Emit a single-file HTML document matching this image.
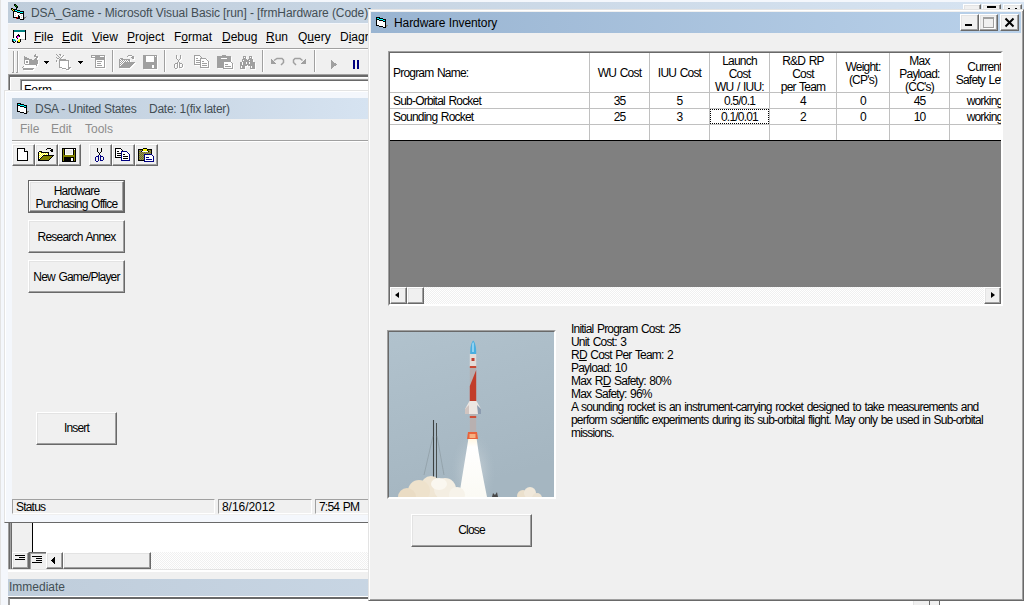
<!DOCTYPE html>
<html><head><meta charset="utf-8">
<style>
*{margin:0;padding:0;box-sizing:border-box}
html,body{width:1024px;height:605px;overflow:hidden;background:#f4f7fc;font-family:"Liberation Sans",sans-serif;}
.a{position:absolute}
.t{position:absolute;white-space:nowrap;font-size:11px;line-height:13px;color:#000}
.cap-in{background:linear-gradient(to right,#bfcddb,#d7e4f2);}
.cap-act{background:linear-gradient(to right,#99b4d1,#b9d1ea);}
.btn{position:absolute;background:#f0f0f0;border-top:1px solid #fff;border-left:1px solid #fff;border-right:1px solid #696969;border-bottom:1px solid #696969;box-shadow:inset -1px -1px 0 #a0a0a0, inset 1px 1px 0 #e3e3e3;}
.sunk{position:absolute;border-top:1px solid #a0a0a0;border-left:1px solid #a0a0a0;border-right:1px solid #fff;border-bottom:1px solid #fff;}
.gt{font-size:12px;letter-spacing:-0.8px;word-spacing:1px}
u{text-decoration:underline;text-decoration-thickness:1px;text-underline-offset:1px}
</style></head><body>

<!-- ===== Main VB IDE window ===== -->
<div class="a" style="left:0;top:0;width:1px;height:605px;background:#e3e3e3"></div>
<div class="a cap-in" style="left:8px;top:2px;width:1016px;height:21px"></div>
<svg class="a" style="left:8px;top:2px" width="20" height="20" shape-rendering="crispEdges"><rect x="6" y="2" width="2" height="1" fill="#000"/><rect x="6" y="3" width="1" height="1" fill="#000"/><rect x="7" y="3" width="1" height="1" fill="#00a000"/><rect x="8" y="3" width="1" height="1" fill="#000"/><rect x="7" y="4" width="1" height="1" fill="#000"/><rect x="8" y="4" width="1" height="1" fill="#00a000"/><rect x="9" y="4" width="1" height="1" fill="#000"/><rect x="8" y="5" width="2" height="1" fill="#000"/><rect x="3" y="6" width="2" height="1" fill="#000"/><rect x="8" y="6" width="1" height="1" fill="#000"/><rect x="3" y="7" width="1" height="1" fill="#000"/><rect x="4" y="7" width="1" height="1" fill="#ffff00"/><rect x="5" y="7" width="4" height="1" fill="#000"/><rect x="4" y="8" width="1" height="1" fill="#000"/><rect x="5" y="8" width="1" height="1" fill="#ffff00"/><rect x="6" y="8" width="1" height="1" fill="#000"/><rect x="7" y="8" width="2" height="1" fill="#00ffff"/><rect x="9" y="8" width="3" height="1" fill="#000"/><rect x="5" y="9" width="4" height="1" fill="#000"/><rect x="9" y="9" width="3" height="1" fill="#00ffff"/><rect x="12" y="9" width="4" height="1" fill="#000"/><rect x="5" y="10" width="1" height="1" fill="#000"/><rect x="6" y="10" width="3" height="1" fill="#fff"/><rect x="9" y="10" width="3" height="1" fill="#000"/><rect x="12" y="10" width="3" height="1" fill="#00ffff"/><rect x="15" y="10" width="1" height="1" fill="#000"/><rect x="5" y="11" width="1" height="1" fill="#000"/><rect x="6" y="11" width="1" height="1" fill="#fff"/><rect x="7" y="11" width="1" height="1" fill="#c0c0c0"/><rect x="8" y="11" width="4" height="1" fill="#fff"/><rect x="12" y="11" width="4" height="1" fill="#000"/><rect x="5" y="12" width="1" height="1" fill="#000"/><rect x="6" y="12" width="5" height="1" fill="#fff"/><rect x="11" y="12" width="1" height="1" fill="#c0c0c0"/><rect x="12" y="12" width="3" height="1" fill="#fff"/><rect x="15" y="12" width="1" height="1" fill="#000"/><rect x="5" y="13" width="1" height="1" fill="#000"/><rect x="6" y="13" width="1" height="1" fill="#fff"/><rect x="7" y="13" width="1" height="1" fill="#c0c0c0"/><rect x="8" y="13" width="2" height="1" fill="#fff"/><rect x="10" y="13" width="1" height="1" fill="#000"/><rect x="11" y="13" width="2" height="1" fill="#fff"/><rect x="13" y="13" width="1" height="1" fill="#c0c0c0"/><rect x="14" y="13" width="1" height="1" fill="#fff"/><rect x="15" y="13" width="1" height="1" fill="#000"/><rect x="5" y="14" width="1" height="1" fill="#000"/><rect x="6" y="14" width="4" height="1" fill="#fff"/><rect x="10" y="14" width="2" height="1" fill="#000"/><rect x="12" y="14" width="3" height="1" fill="#fff"/><rect x="15" y="14" width="1" height="1" fill="#000"/><rect x="18" y="14" width="1" height="1" fill="#b0b0b0"/><rect x="5" y="15" width="4" height="1" fill="#000"/><rect x="9" y="15" width="1" height="1" fill="#ff0000"/><rect x="10" y="15" width="2" height="1" fill="#000"/><rect x="12" y="15" width="1" height="1" fill="#fff"/><rect x="13" y="15" width="1" height="1" fill="#c0c0c0"/><rect x="14" y="15" width="1" height="1" fill="#fff"/><rect x="15" y="15" width="1" height="1" fill="#000"/><rect x="16" y="15" width="2" height="1" fill="#808080"/><rect x="8" y="16" width="1" height="1" fill="#ff0000"/><rect x="9" y="16" width="3" height="1" fill="#000"/><rect x="12" y="16" width="3" height="1" fill="#fff"/><rect x="15" y="16" width="1" height="1" fill="#000"/><rect x="16" y="16" width="1" height="1" fill="#808080"/><rect x="12" y="17" width="4" height="1" fill="#000"/></svg>
<div class="t" style="left:31px;top:6px;font-size:12px;line-height:15px;color:#434e54;letter-spacing:-0.09px">DSA_Game - Microsoft Visual Basic [run] - [frmHardware (Code)]</div>

<div class="btn" style="left:963px;top:4px;width:18px;height:16px"></div>
<div class="btn" style="left:982px;top:4px;width:19px;height:16px"></div>
<div class="btn" style="left:1003px;top:4px;width:19px;height:16px"></div>
<div class="a" style="left:987px;top:6px;width:9px;height:2px;background:#000"></div>
<div class="a" style="left:1008px;top:8px;width:2px;height:1px;background:#000"></div>
<div class="a" style="left:1015px;top:8px;width:2px;height:1px;background:#000"></div>
<!-- menubar -->
<div class="a" style="left:8px;top:24px;width:1016px;height:25px;background:#f0f0f0;border-bottom:1px solid #a0a0a0"></div>
<div class="a" style="left:8px;top:49px;width:1016px;height:1px;background:#fff"></div>
<svg class="a" style="left:8px;top:26px" width="20" height="20" shape-rendering="crispEdges"><rect x="5" y="4" width="1" height="1" fill="#000"/><rect x="6" y="4" width="11" height="1" fill="#008080"/><rect x="17" y="4" width="1" height="1" fill="#000"/><rect x="5" y="5" width="1" height="1" fill="#000"/><rect x="6" y="5" width="11" height="1" fill="#008080"/><rect x="17" y="5" width="1" height="1" fill="#000"/><rect x="5" y="6" width="1" height="1" fill="#000"/><rect x="6" y="6" width="11" height="1" fill="#fff"/><rect x="17" y="6" width="1" height="1" fill="#000"/><rect x="5" y="7" width="1" height="1" fill="#000"/><rect x="6" y="7" width="11" height="1" fill="#fff"/><rect x="17" y="7" width="1" height="1" fill="#000"/><rect x="5" y="8" width="1" height="1" fill="#000"/><rect x="6" y="8" width="4" height="1" fill="#fff"/><rect x="10" y="8" width="1" height="1" fill="#000"/><rect x="11" y="8" width="6" height="1" fill="#fff"/><rect x="17" y="8" width="1" height="1" fill="#000"/><rect x="5" y="9" width="1" height="1" fill="#000"/><rect x="6" y="9" width="3" height="1" fill="#fff"/><rect x="9" y="9" width="3" height="1" fill="#000"/><rect x="12" y="9" width="5" height="1" fill="#fff"/><rect x="17" y="9" width="1" height="1" fill="#000"/><rect x="5" y="10" width="1" height="1" fill="#000"/><rect x="6" y="10" width="2" height="1" fill="#fff"/><rect x="8" y="10" width="1" height="1" fill="#000"/><rect x="9" y="10" width="2" height="1" fill="#ff00ff"/><rect x="11" y="10" width="1" height="1" fill="#000"/><rect x="12" y="10" width="5" height="1" fill="#fff"/><rect x="17" y="10" width="1" height="1" fill="#000"/><rect x="5" y="11" width="1" height="1" fill="#000"/><rect x="6" y="11" width="2" height="1" fill="#fff"/><rect x="8" y="11" width="1" height="1" fill="#000"/><rect x="9" y="11" width="1" height="1" fill="#ff00ff"/><rect x="10" y="11" width="7" height="1" fill="#fff"/><rect x="17" y="11" width="1" height="1" fill="#000"/><rect x="6" y="12" width="3" height="1" fill="#fff"/><rect x="9" y="12" width="1" height="1" fill="#000"/><rect x="10" y="12" width="7" height="1" fill="#fff"/><rect x="17" y="12" width="1" height="1" fill="#000"/><rect x="4" y="13" width="1" height="1" fill="#000"/><rect x="5" y="13" width="2" height="1" fill="#00c8c8"/><rect x="11" y="13" width="1" height="1" fill="#ffff00"/><rect x="12" y="13" width="1" height="1" fill="#000"/><rect x="13" y="13" width="4" height="1" fill="#c0c0c0"/><rect x="17" y="13" width="1" height="1" fill="#000"/><rect x="4" y="14" width="1" height="1" fill="#000"/><rect x="5" y="14" width="3" height="1" fill="#00c8c8"/><rect x="10" y="14" width="2" height="1" fill="#ffff00"/><rect x="12" y="14" width="1" height="1" fill="#000"/><rect x="4" y="15" width="2" height="1" fill="#000"/><rect x="7" y="15" width="1" height="1" fill="#000"/><rect x="9" y="15" width="1" height="1" fill="#000"/><rect x="10" y="15" width="2" height="1" fill="#ffff00"/><rect x="12" y="15" width="1" height="1" fill="#000"/><rect x="5" y="16" width="2" height="1" fill="#000"/><rect x="9" y="16" width="3" height="1" fill="#000"/></svg>
<div class="t" style="left:34px;top:30px;font-size:12px;line-height:15px"><u>F</u>ile</div>
<div class="t" style="left:62px;top:30px;font-size:12px;line-height:15px"><u>E</u>dit</div>
<div class="t" style="left:92px;top:30px;font-size:12px;line-height:15px"><u>V</u>iew</div>
<div class="t" style="left:127px;top:30px;font-size:12px;line-height:15px"><u>P</u>roject</div>
<div class="t" style="left:174px;top:30px;font-size:12px;line-height:15px">F<u>o</u>rmat</div>
<div class="t" style="left:222px;top:30px;font-size:12px;line-height:15px"><u>D</u>ebug</div>
<div class="t" style="left:266px;top:30px;font-size:12px;line-height:15px"><u>R</u>un</div>
<div class="t" style="left:298px;top:30px;font-size:12px;line-height:15px">Q<u>u</u>ery</div>
<div class="t" style="left:340px;top:30px;font-size:12px;line-height:15px">D<u>i</u>agram</div>

<!-- toolbar -->
<div class="a" style="left:8px;top:50px;width:1016px;height:24px;background:#f0f0f0"></div>

<svg class="a" style="left:0;top:48px" width="368" height="28" shape-rendering="crispEdges">
<rect x="13" y="3" width="1" height="21" fill="#a0a0a0"/><rect x="17" y="3" width="1" height="21" fill="#a0a0a0"/>
<rect x="14" y="3" width="1" height="21" fill="#fff"/><rect x="18" y="3" width="1" height="21" fill="#fff"/>
<rect x="12" y="24" width="2" height="1" fill="#a0a0a0"/><rect x="16" y="24" width="2" height="1" fill="#a0a0a0"/>
<path d="M44,13 h5 l-2.5,3 z" fill="#000"/>
<path d="M78,13 h5 l-2.5,3 z" fill="#000"/>
<rect x="112" y="2" width="1" height="22" fill="#a0a0a0"/><rect x="113" y="2" width="1" height="22" fill="#fff"/>
<rect x="164" y="2" width="1" height="22" fill="#a0a0a0"/><rect x="165" y="2" width="1" height="22" fill="#fff"/>
<rect x="262" y="2" width="1" height="22" fill="#a0a0a0"/><rect x="263" y="2" width="1" height="22" fill="#fff"/>
<g fill="none" stroke="#a0a0a0" stroke-width="1.5" shape-rendering="auto">
<path d="M274,12.5 L277,10.5 L282,10.5 L283.5,12 L283.5,14.5 L281,17"/>
<path d="M302.5,12.5 L300,10.5 L295,10.5 L293.5,12 L293.5,14.5 L296,17"/>
</g>
<path d="M271,10 L271,16 L276,16 Z" fill="#a0a0a0"/>
<path d="M306,10 L306,16 L301,16 Z" fill="#a0a0a0"/>
<rect x="314" y="2" width="1" height="22" fill="#a0a0a0"/><rect x="315" y="2" width="1" height="22" fill="#fff"/>
<path d="M331,12 L337,16.5 L331,21 Z" fill="#a0a0a0"/>
<rect x="353" y="12" width="2" height="9" fill="#000080"/><rect x="357" y="12" width="2" height="9" fill="#000080"/>
</svg>
<svg class="a" style="left:0;top:48px" width="368" height="28" shape-rendering="crispEdges"><rect x="35" y="6" width="1" height="1" fill="#a0a0a0"/><rect x="56" y="6" width="1" height="1" fill="#a0a0a0"/><rect x="59" y="6" width="2" height="1" fill="#a0a0a0"/><rect x="34" y="7" width="2" height="1" fill="#a0a0a0"/><rect x="36" y="7" width="1" height="1" fill="#fff"/><rect x="57" y="7" width="1" height="1" fill="#a0a0a0"/><rect x="60" y="7" width="1" height="1" fill="#a0a0a0"/><rect x="61" y="7" width="1" height="1" fill="#fff"/><rect x="63" y="7" width="1" height="1" fill="#a0a0a0"/><rect x="91" y="7" width="14" height="1" fill="#a0a0a0"/><rect x="128" y="7" width="4" height="1" fill="#a0a0a0"/><rect x="143" y="7" width="14" height="1" fill="#a0a0a0"/><rect x="176" y="7" width="1" height="1" fill="#a0a0a0"/><rect x="180" y="7" width="1" height="1" fill="#a0a0a0"/><rect x="194" y="7" width="6" height="1" fill="#a0a0a0"/><rect x="222" y="7" width="4" height="1" fill="#a0a0a0"/><rect x="24" y="8" width="1" height="1" fill="#a0a0a0"/><rect x="34" y="8" width="4" height="1" fill="#a0a0a0"/><rect x="58" y="8" width="1" height="1" fill="#a0a0a0"/><rect x="61" y="8" width="1" height="1" fill="#fff"/><rect x="62" y="8" width="1" height="1" fill="#a0a0a0"/><rect x="64" y="8" width="1" height="1" fill="#fff"/><rect x="91" y="8" width="1" height="1" fill="#a0a0a0"/><rect x="92" y="8" width="3" height="1" fill="#fff"/><rect x="95" y="8" width="5" height="1" fill="#a0a0a0"/><rect x="100" y="8" width="4" height="1" fill="#fff"/><rect x="104" y="8" width="1" height="1" fill="#a0a0a0"/><rect x="105" y="8" width="1" height="1" fill="#fff"/><rect x="127" y="8" width="1" height="1" fill="#a0a0a0"/><rect x="129" y="8" width="3" height="1" fill="#fff"/><rect x="132" y="8" width="2" height="1" fill="#a0a0a0"/><rect x="143" y="8" width="3" height="1" fill="#a0a0a0"/><rect x="146" y="8" width="8" height="1" fill="#fff"/><rect x="154" y="8" width="1" height="1" fill="#a0a0a0"/><rect x="155" y="8" width="1" height="1" fill="#fff"/><rect x="156" y="8" width="1" height="1" fill="#a0a0a0"/><rect x="157" y="8" width="1" height="1" fill="#fff"/><rect x="176" y="8" width="1" height="1" fill="#a0a0a0"/><rect x="177" y="8" width="1" height="1" fill="#fff"/><rect x="180" y="8" width="1" height="1" fill="#a0a0a0"/><rect x="181" y="8" width="1" height="1" fill="#fff"/><rect x="194" y="8" width="1" height="1" fill="#a0a0a0"/><rect x="195" y="8" width="5" height="1" fill="#fff"/><rect x="200" y="8" width="1" height="1" fill="#a0a0a0"/><rect x="217" y="8" width="14" height="1" fill="#a0a0a0"/><rect x="243" y="8" width="3" height="1" fill="#a0a0a0"/><rect x="249" y="8" width="3" height="1" fill="#a0a0a0"/><rect x="24" y="9" width="3" height="1" fill="#a0a0a0"/><rect x="35" y="9" width="1" height="1" fill="#fff"/><rect x="36" y="9" width="2" height="1" fill="#a0a0a0"/><rect x="38" y="9" width="1" height="1" fill="#fff"/><rect x="56" y="9" width="1" height="1" fill="#a0a0a0"/><rect x="59" y="9" width="1" height="1" fill="#a0a0a0"/><rect x="61" y="9" width="1" height="1" fill="#a0a0a0"/><rect x="63" y="9" width="1" height="1" fill="#fff"/><rect x="91" y="9" width="14" height="1" fill="#a0a0a0"/><rect x="105" y="9" width="1" height="1" fill="#fff"/><rect x="128" y="9" width="1" height="1" fill="#fff"/><rect x="131" y="9" width="3" height="1" fill="#a0a0a0"/><rect x="134" y="9" width="1" height="1" fill="#fff"/><rect x="143" y="9" width="3" height="1" fill="#a0a0a0"/><rect x="146" y="9" width="8" height="1" fill="#fff"/><rect x="154" y="9" width="3" height="1" fill="#a0a0a0"/><rect x="157" y="9" width="1" height="1" fill="#fff"/><rect x="176" y="9" width="1" height="1" fill="#a0a0a0"/><rect x="177" y="9" width="1" height="1" fill="#fff"/><rect x="180" y="9" width="1" height="1" fill="#a0a0a0"/><rect x="181" y="9" width="1" height="1" fill="#fff"/><rect x="194" y="9" width="1" height="1" fill="#a0a0a0"/><rect x="195" y="9" width="5" height="1" fill="#fff"/><rect x="201" y="9" width="1" height="1" fill="#a0a0a0"/><rect x="217" y="9" width="14" height="1" fill="#a0a0a0"/><rect x="231" y="9" width="1" height="1" fill="#fff"/><rect x="243" y="9" width="1" height="1" fill="#a0a0a0"/><rect x="244" y="9" width="1" height="1" fill="#fff"/><rect x="245" y="9" width="1" height="1" fill="#a0a0a0"/><rect x="246" y="9" width="1" height="1" fill="#fff"/><rect x="249" y="9" width="1" height="1" fill="#a0a0a0"/><rect x="250" y="9" width="1" height="1" fill="#fff"/><rect x="251" y="9" width="1" height="1" fill="#a0a0a0"/><rect x="252" y="9" width="1" height="1" fill="#fff"/><rect x="24" y="10" width="5" height="1" fill="#a0a0a0"/><rect x="35" y="10" width="2" height="1" fill="#a0a0a0"/><rect x="37" y="10" width="2" height="1" fill="#fff"/><rect x="57" y="10" width="2" height="1" fill="#a0a0a0"/><rect x="60" y="10" width="1" height="1" fill="#a0a0a0"/><rect x="62" y="10" width="1" height="1" fill="#fff"/><rect x="91" y="10" width="4" height="1" fill="#fff"/><rect x="95" y="10" width="10" height="1" fill="#a0a0a0"/><rect x="105" y="10" width="1" height="1" fill="#fff"/><rect x="120" y="10" width="3" height="1" fill="#a0a0a0"/><rect x="132" y="10" width="2" height="1" fill="#a0a0a0"/><rect x="134" y="10" width="1" height="1" fill="#fff"/><rect x="143" y="10" width="3" height="1" fill="#a0a0a0"/><rect x="146" y="10" width="8" height="1" fill="#fff"/><rect x="154" y="10" width="3" height="1" fill="#a0a0a0"/><rect x="157" y="10" width="1" height="1" fill="#fff"/><rect x="176" y="10" width="1" height="1" fill="#a0a0a0"/><rect x="177" y="10" width="1" height="1" fill="#fff"/><rect x="180" y="10" width="1" height="1" fill="#a0a0a0"/><rect x="181" y="10" width="1" height="1" fill="#fff"/><rect x="194" y="10" width="1" height="1" fill="#a0a0a0"/><rect x="195" y="10" width="1" height="1" fill="#fff"/><rect x="196" y="10" width="2" height="1" fill="#a0a0a0"/><rect x="198" y="10" width="2" height="1" fill="#fff"/><rect x="200" y="10" width="6" height="1" fill="#a0a0a0"/><rect x="217" y="10" width="4" height="1" fill="#a0a0a0"/><rect x="221" y="10" width="6" height="1" fill="#fff"/><rect x="227" y="10" width="4" height="1" fill="#a0a0a0"/><rect x="231" y="10" width="1" height="1" fill="#fff"/><rect x="243" y="10" width="3" height="1" fill="#a0a0a0"/><rect x="246" y="10" width="1" height="1" fill="#fff"/><rect x="249" y="10" width="3" height="1" fill="#a0a0a0"/><rect x="252" y="10" width="1" height="1" fill="#fff"/><rect x="24" y="11" width="8" height="1" fill="#a0a0a0"/><rect x="34" y="11" width="3" height="1" fill="#a0a0a0"/><rect x="37" y="11" width="1" height="1" fill="#fff"/><rect x="58" y="11" width="1" height="1" fill="#fff"/><rect x="59" y="11" width="7" height="1" fill="#a0a0a0"/><rect x="95" y="11" width="10" height="1" fill="#a0a0a0"/><rect x="105" y="11" width="1" height="1" fill="#fff"/><rect x="119" y="11" width="1" height="1" fill="#a0a0a0"/><rect x="120" y="11" width="1" height="1" fill="#fff"/><rect x="121" y="11" width="9" height="1" fill="#a0a0a0"/><rect x="133" y="11" width="2" height="1" fill="#fff"/><rect x="143" y="11" width="3" height="1" fill="#a0a0a0"/><rect x="146" y="11" width="8" height="1" fill="#fff"/><rect x="154" y="11" width="3" height="1" fill="#a0a0a0"/><rect x="157" y="11" width="1" height="1" fill="#fff"/><rect x="177" y="11" width="1" height="1" fill="#a0a0a0"/><rect x="179" y="11" width="1" height="1" fill="#a0a0a0"/><rect x="181" y="11" width="1" height="1" fill="#fff"/><rect x="194" y="11" width="1" height="1" fill="#a0a0a0"/><rect x="195" y="11" width="5" height="1" fill="#fff"/><rect x="200" y="11" width="1" height="1" fill="#a0a0a0"/><rect x="201" y="11" width="5" height="1" fill="#fff"/><rect x="206" y="11" width="1" height="1" fill="#a0a0a0"/><rect x="207" y="11" width="1" height="1" fill="#fff"/><rect x="217" y="11" width="14" height="1" fill="#a0a0a0"/><rect x="231" y="11" width="1" height="1" fill="#fff"/><rect x="242" y="11" width="5" height="1" fill="#a0a0a0"/><rect x="248" y="11" width="5" height="1" fill="#a0a0a0"/><rect x="24" y="12" width="1" height="1" fill="#a0a0a0"/><rect x="25" y="12" width="4" height="1" fill="#fff"/><rect x="29" y="12" width="9" height="1" fill="#a0a0a0"/><rect x="56" y="12" width="1" height="1" fill="#a0a0a0"/><rect x="59" y="12" width="10" height="1" fill="#a0a0a0"/><rect x="95" y="12" width="1" height="1" fill="#a0a0a0"/><rect x="96" y="12" width="8" height="1" fill="#fff"/><rect x="104" y="12" width="1" height="1" fill="#a0a0a0"/><rect x="105" y="12" width="1" height="1" fill="#fff"/><rect x="119" y="12" width="2" height="1" fill="#a0a0a0"/><rect x="121" y="12" width="1" height="1" fill="#fff"/><rect x="122" y="12" width="1" height="1" fill="#a0a0a0"/><rect x="123" y="12" width="1" height="1" fill="#fff"/><rect x="124" y="12" width="1" height="1" fill="#a0a0a0"/><rect x="125" y="12" width="1" height="1" fill="#fff"/><rect x="126" y="12" width="1" height="1" fill="#a0a0a0"/><rect x="127" y="12" width="1" height="1" fill="#fff"/><rect x="128" y="12" width="2" height="1" fill="#a0a0a0"/><rect x="130" y="12" width="1" height="1" fill="#fff"/><rect x="143" y="12" width="3" height="1" fill="#a0a0a0"/><rect x="146" y="12" width="8" height="1" fill="#fff"/><rect x="154" y="12" width="3" height="1" fill="#a0a0a0"/><rect x="157" y="12" width="1" height="1" fill="#fff"/><rect x="178" y="12" width="1" height="1" fill="#a0a0a0"/><rect x="180" y="12" width="1" height="1" fill="#fff"/><rect x="194" y="12" width="1" height="1" fill="#a0a0a0"/><rect x="195" y="12" width="1" height="1" fill="#fff"/><rect x="196" y="12" width="5" height="1" fill="#a0a0a0"/><rect x="201" y="12" width="6" height="1" fill="#fff"/><rect x="207" y="12" width="1" height="1" fill="#a0a0a0"/><rect x="217" y="12" width="14" height="1" fill="#a0a0a0"/><rect x="231" y="12" width="1" height="1" fill="#fff"/><rect x="242" y="12" width="1" height="1" fill="#a0a0a0"/><rect x="243" y="12" width="1" height="1" fill="#fff"/><rect x="244" y="12" width="5" height="1" fill="#a0a0a0"/><rect x="249" y="12" width="1" height="1" fill="#fff"/><rect x="250" y="12" width="3" height="1" fill="#a0a0a0"/><rect x="253" y="12" width="1" height="1" fill="#fff"/><rect x="24" y="13" width="1" height="1" fill="#a0a0a0"/><rect x="25" y="13" width="1" height="1" fill="#fff"/><rect x="26" y="13" width="2" height="1" fill="#a0a0a0"/><rect x="28" y="13" width="1" height="1" fill="#fff"/><rect x="29" y="13" width="9" height="1" fill="#a0a0a0"/><rect x="38" y="13" width="1" height="1" fill="#fff"/><rect x="56" y="13" width="1" height="1" fill="#a0a0a0"/><rect x="57" y="13" width="1" height="1" fill="#fff"/><rect x="59" y="13" width="1" height="1" fill="#a0a0a0"/><rect x="60" y="13" width="8" height="1" fill="#fff"/><rect x="68" y="13" width="1" height="1" fill="#a0a0a0"/><rect x="69" y="13" width="1" height="1" fill="#fff"/><rect x="95" y="13" width="1" height="1" fill="#a0a0a0"/><rect x="96" y="13" width="1" height="1" fill="#fff"/><rect x="97" y="13" width="5" height="1" fill="#a0a0a0"/><rect x="102" y="13" width="2" height="1" fill="#fff"/><rect x="104" y="13" width="1" height="1" fill="#a0a0a0"/><rect x="105" y="13" width="1" height="1" fill="#fff"/><rect x="119" y="13" width="1" height="1" fill="#a0a0a0"/><rect x="120" y="13" width="1" height="1" fill="#fff"/><rect x="121" y="13" width="1" height="1" fill="#a0a0a0"/><rect x="122" y="13" width="1" height="1" fill="#fff"/><rect x="123" y="13" width="1" height="1" fill="#a0a0a0"/><rect x="124" y="13" width="1" height="1" fill="#fff"/><rect x="125" y="13" width="1" height="1" fill="#a0a0a0"/><rect x="126" y="13" width="1" height="1" fill="#fff"/><rect x="127" y="13" width="1" height="1" fill="#a0a0a0"/><rect x="128" y="13" width="1" height="1" fill="#fff"/><rect x="129" y="13" width="1" height="1" fill="#a0a0a0"/><rect x="130" y="13" width="1" height="1" fill="#fff"/><rect x="143" y="13" width="3" height="1" fill="#a0a0a0"/><rect x="146" y="13" width="8" height="1" fill="#fff"/><rect x="154" y="13" width="3" height="1" fill="#a0a0a0"/><rect x="157" y="13" width="1" height="1" fill="#fff"/><rect x="178" y="13" width="1" height="1" fill="#a0a0a0"/><rect x="179" y="13" width="1" height="1" fill="#fff"/><rect x="194" y="13" width="1" height="1" fill="#a0a0a0"/><rect x="195" y="13" width="5" height="1" fill="#fff"/><rect x="200" y="13" width="1" height="1" fill="#a0a0a0"/><rect x="201" y="13" width="1" height="1" fill="#fff"/><rect x="202" y="13" width="2" height="1" fill="#a0a0a0"/><rect x="204" y="13" width="4" height="1" fill="#fff"/><rect x="208" y="13" width="1" height="1" fill="#a0a0a0"/><rect x="217" y="13" width="14" height="1" fill="#a0a0a0"/><rect x="231" y="13" width="1" height="1" fill="#fff"/><rect x="242" y="13" width="11" height="1" fill="#a0a0a0"/><rect x="253" y="13" width="1" height="1" fill="#fff"/><rect x="24" y="14" width="1" height="1" fill="#a0a0a0"/><rect x="25" y="14" width="1" height="1" fill="#fff"/><rect x="26" y="14" width="2" height="1" fill="#a0a0a0"/><rect x="28" y="14" width="1" height="1" fill="#fff"/><rect x="29" y="14" width="9" height="1" fill="#a0a0a0"/><rect x="38" y="14" width="1" height="1" fill="#fff"/><rect x="57" y="14" width="1" height="1" fill="#fff"/><rect x="59" y="14" width="1" height="1" fill="#a0a0a0"/><rect x="60" y="14" width="8" height="1" fill="#fff"/><rect x="68" y="14" width="1" height="1" fill="#a0a0a0"/><rect x="69" y="14" width="1" height="1" fill="#fff"/><rect x="95" y="14" width="1" height="1" fill="#a0a0a0"/><rect x="96" y="14" width="8" height="1" fill="#fff"/><rect x="104" y="14" width="1" height="1" fill="#a0a0a0"/><rect x="105" y="14" width="1" height="1" fill="#fff"/><rect x="119" y="14" width="2" height="1" fill="#a0a0a0"/><rect x="121" y="14" width="1" height="1" fill="#fff"/><rect x="122" y="14" width="1" height="1" fill="#a0a0a0"/><rect x="123" y="14" width="1" height="1" fill="#fff"/><rect x="124" y="14" width="11" height="1" fill="#a0a0a0"/><rect x="143" y="14" width="14" height="1" fill="#a0a0a0"/><rect x="157" y="14" width="1" height="1" fill="#fff"/><rect x="177" y="14" width="1" height="1" fill="#a0a0a0"/><rect x="179" y="14" width="1" height="1" fill="#a0a0a0"/><rect x="194" y="14" width="1" height="1" fill="#a0a0a0"/><rect x="195" y="14" width="1" height="1" fill="#fff"/><rect x="196" y="14" width="5" height="1" fill="#a0a0a0"/><rect x="201" y="14" width="7" height="1" fill="#fff"/><rect x="208" y="14" width="1" height="1" fill="#a0a0a0"/><rect x="209" y="14" width="1" height="1" fill="#fff"/><rect x="217" y="14" width="7" height="1" fill="#a0a0a0"/><rect x="224" y="14" width="7" height="1" fill="#fff"/><rect x="231" y="14" width="1" height="1" fill="#a0a0a0"/><rect x="240" y="14" width="2" height="1" fill="#a0a0a0"/><rect x="242" y="14" width="1" height="1" fill="#fff"/><rect x="243" y="14" width="3" height="1" fill="#a0a0a0"/><rect x="246" y="14" width="1" height="1" fill="#fff"/><rect x="247" y="14" width="2" height="1" fill="#a0a0a0"/><rect x="249" y="14" width="1" height="1" fill="#fff"/><rect x="250" y="14" width="5" height="1" fill="#a0a0a0"/><rect x="24" y="15" width="1" height="1" fill="#a0a0a0"/><rect x="25" y="15" width="4" height="1" fill="#fff"/><rect x="29" y="15" width="9" height="1" fill="#a0a0a0"/><rect x="38" y="15" width="1" height="1" fill="#fff"/><rect x="59" y="15" width="1" height="1" fill="#a0a0a0"/><rect x="60" y="15" width="8" height="1" fill="#fff"/><rect x="68" y="15" width="1" height="1" fill="#a0a0a0"/><rect x="69" y="15" width="1" height="1" fill="#fff"/><rect x="95" y="15" width="1" height="1" fill="#a0a0a0"/><rect x="96" y="15" width="1" height="1" fill="#fff"/><rect x="97" y="15" width="4" height="1" fill="#a0a0a0"/><rect x="101" y="15" width="3" height="1" fill="#fff"/><rect x="104" y="15" width="1" height="1" fill="#a0a0a0"/><rect x="105" y="15" width="1" height="1" fill="#fff"/><rect x="119" y="15" width="1" height="1" fill="#a0a0a0"/><rect x="120" y="15" width="1" height="1" fill="#fff"/><rect x="121" y="15" width="1" height="1" fill="#a0a0a0"/><rect x="122" y="15" width="1" height="1" fill="#fff"/><rect x="123" y="15" width="11" height="1" fill="#a0a0a0"/><rect x="134" y="15" width="2" height="1" fill="#fff"/><rect x="143" y="15" width="14" height="1" fill="#a0a0a0"/><rect x="157" y="15" width="1" height="1" fill="#fff"/><rect x="175" y="15" width="3" height="1" fill="#a0a0a0"/><rect x="178" y="15" width="1" height="1" fill="#fff"/><rect x="179" y="15" width="3" height="1" fill="#a0a0a0"/><rect x="194" y="15" width="1" height="1" fill="#a0a0a0"/><rect x="195" y="15" width="5" height="1" fill="#fff"/><rect x="200" y="15" width="1" height="1" fill="#a0a0a0"/><rect x="201" y="15" width="1" height="1" fill="#fff"/><rect x="202" y="15" width="5" height="1" fill="#a0a0a0"/><rect x="207" y="15" width="1" height="1" fill="#fff"/><rect x="208" y="15" width="1" height="1" fill="#a0a0a0"/><rect x="209" y="15" width="1" height="1" fill="#fff"/><rect x="217" y="15" width="7" height="1" fill="#a0a0a0"/><rect x="224" y="15" width="8" height="1" fill="#fff"/><rect x="232" y="15" width="1" height="1" fill="#a0a0a0"/><rect x="240" y="15" width="2" height="1" fill="#a0a0a0"/><rect x="242" y="15" width="1" height="1" fill="#fff"/><rect x="243" y="15" width="3" height="1" fill="#a0a0a0"/><rect x="246" y="15" width="1" height="1" fill="#fff"/><rect x="247" y="15" width="2" height="1" fill="#a0a0a0"/><rect x="249" y="15" width="1" height="1" fill="#fff"/><rect x="250" y="15" width="5" height="1" fill="#a0a0a0"/><rect x="255" y="15" width="1" height="1" fill="#fff"/><rect x="25" y="16" width="12" height="1" fill="#a0a0a0"/><rect x="37" y="16" width="2" height="1" fill="#fff"/><rect x="59" y="16" width="1" height="1" fill="#a0a0a0"/><rect x="60" y="16" width="8" height="1" fill="#fff"/><rect x="68" y="16" width="1" height="1" fill="#a0a0a0"/><rect x="69" y="16" width="1" height="1" fill="#fff"/><rect x="95" y="16" width="1" height="1" fill="#a0a0a0"/><rect x="96" y="16" width="8" height="1" fill="#fff"/><rect x="104" y="16" width="1" height="1" fill="#a0a0a0"/><rect x="105" y="16" width="1" height="1" fill="#fff"/><rect x="119" y="16" width="2" height="1" fill="#a0a0a0"/><rect x="121" y="16" width="1" height="1" fill="#fff"/><rect x="122" y="16" width="11" height="1" fill="#a0a0a0"/><rect x="133" y="16" width="2" height="1" fill="#fff"/><rect x="143" y="16" width="14" height="1" fill="#a0a0a0"/><rect x="157" y="16" width="1" height="1" fill="#fff"/><rect x="174" y="16" width="1" height="1" fill="#a0a0a0"/><rect x="176" y="16" width="1" height="1" fill="#fff"/><rect x="177" y="16" width="1" height="1" fill="#a0a0a0"/><rect x="178" y="16" width="1" height="1" fill="#fff"/><rect x="179" y="16" width="1" height="1" fill="#a0a0a0"/><rect x="180" y="16" width="2" height="1" fill="#fff"/><rect x="182" y="16" width="1" height="1" fill="#a0a0a0"/><rect x="194" y="16" width="7" height="1" fill="#a0a0a0"/><rect x="201" y="16" width="7" height="1" fill="#fff"/><rect x="208" y="16" width="1" height="1" fill="#a0a0a0"/><rect x="209" y="16" width="1" height="1" fill="#fff"/><rect x="217" y="16" width="7" height="1" fill="#a0a0a0"/><rect x="224" y="16" width="1" height="1" fill="#fff"/><rect x="225" y="16" width="3" height="1" fill="#a0a0a0"/><rect x="228" y="16" width="4" height="1" fill="#fff"/><rect x="232" y="16" width="1" height="1" fill="#a0a0a0"/><rect x="233" y="16" width="1" height="1" fill="#fff"/><rect x="240" y="16" width="2" height="1" fill="#a0a0a0"/><rect x="242" y="16" width="1" height="1" fill="#fff"/><rect x="243" y="16" width="12" height="1" fill="#a0a0a0"/><rect x="255" y="16" width="1" height="1" fill="#fff"/><rect x="24" y="17" width="12" height="1" fill="#fff"/><rect x="36" y="17" width="1" height="1" fill="#a0a0a0"/><rect x="37" y="17" width="1" height="1" fill="#fff"/><rect x="59" y="17" width="1" height="1" fill="#a0a0a0"/><rect x="60" y="17" width="8" height="1" fill="#fff"/><rect x="68" y="17" width="1" height="1" fill="#a0a0a0"/><rect x="69" y="17" width="1" height="1" fill="#fff"/><rect x="95" y="17" width="1" height="1" fill="#a0a0a0"/><rect x="96" y="17" width="1" height="1" fill="#fff"/><rect x="97" y="17" width="5" height="1" fill="#a0a0a0"/><rect x="102" y="17" width="2" height="1" fill="#fff"/><rect x="104" y="17" width="1" height="1" fill="#a0a0a0"/><rect x="105" y="17" width="1" height="1" fill="#fff"/><rect x="119" y="17" width="1" height="1" fill="#a0a0a0"/><rect x="120" y="17" width="1" height="1" fill="#fff"/><rect x="121" y="17" width="11" height="1" fill="#a0a0a0"/><rect x="132" y="17" width="2" height="1" fill="#fff"/><rect x="143" y="17" width="9" height="1" fill="#a0a0a0"/><rect x="152" y="17" width="2" height="1" fill="#fff"/><rect x="154" y="17" width="3" height="1" fill="#a0a0a0"/><rect x="157" y="17" width="1" height="1" fill="#fff"/><rect x="174" y="17" width="1" height="1" fill="#a0a0a0"/><rect x="175" y="17" width="1" height="1" fill="#fff"/><rect x="177" y="17" width="1" height="1" fill="#a0a0a0"/><rect x="178" y="17" width="1" height="1" fill="#fff"/><rect x="179" y="17" width="1" height="1" fill="#a0a0a0"/><rect x="180" y="17" width="1" height="1" fill="#fff"/><rect x="182" y="17" width="1" height="1" fill="#a0a0a0"/><rect x="183" y="17" width="1" height="1" fill="#fff"/><rect x="195" y="17" width="5" height="1" fill="#fff"/><rect x="200" y="17" width="1" height="1" fill="#a0a0a0"/><rect x="201" y="17" width="1" height="1" fill="#fff"/><rect x="202" y="17" width="5" height="1" fill="#a0a0a0"/><rect x="207" y="17" width="1" height="1" fill="#fff"/><rect x="208" y="17" width="1" height="1" fill="#a0a0a0"/><rect x="209" y="17" width="1" height="1" fill="#fff"/><rect x="217" y="17" width="7" height="1" fill="#a0a0a0"/><rect x="224" y="17" width="8" height="1" fill="#fff"/><rect x="232" y="17" width="1" height="1" fill="#a0a0a0"/><rect x="233" y="17" width="1" height="1" fill="#fff"/><rect x="240" y="17" width="7" height="1" fill="#a0a0a0"/><rect x="247" y="17" width="1" height="1" fill="#fff"/><rect x="248" y="17" width="7" height="1" fill="#a0a0a0"/><rect x="255" y="17" width="1" height="1" fill="#fff"/><rect x="23" y="18" width="1" height="1" fill="#a0a0a0"/><rect x="24" y="18" width="12" height="1" fill="#fff"/><rect x="37" y="18" width="1" height="1" fill="#fff"/><rect x="59" y="18" width="1" height="1" fill="#a0a0a0"/><rect x="60" y="18" width="8" height="1" fill="#fff"/><rect x="68" y="18" width="1" height="1" fill="#a0a0a0"/><rect x="69" y="18" width="1" height="1" fill="#fff"/><rect x="95" y="18" width="1" height="1" fill="#a0a0a0"/><rect x="96" y="18" width="8" height="1" fill="#fff"/><rect x="104" y="18" width="1" height="1" fill="#a0a0a0"/><rect x="105" y="18" width="1" height="1" fill="#fff"/><rect x="119" y="18" width="12" height="1" fill="#a0a0a0"/><rect x="131" y="18" width="2" height="1" fill="#fff"/><rect x="143" y="18" width="9" height="1" fill="#a0a0a0"/><rect x="152" y="18" width="2" height="1" fill="#fff"/><rect x="154" y="18" width="3" height="1" fill="#a0a0a0"/><rect x="157" y="18" width="1" height="1" fill="#fff"/><rect x="174" y="18" width="1" height="1" fill="#a0a0a0"/><rect x="175" y="18" width="1" height="1" fill="#fff"/><rect x="177" y="18" width="1" height="1" fill="#a0a0a0"/><rect x="178" y="18" width="1" height="1" fill="#fff"/><rect x="179" y="18" width="1" height="1" fill="#a0a0a0"/><rect x="180" y="18" width="1" height="1" fill="#fff"/><rect x="182" y="18" width="1" height="1" fill="#a0a0a0"/><rect x="183" y="18" width="1" height="1" fill="#fff"/><rect x="200" y="18" width="1" height="1" fill="#a0a0a0"/><rect x="201" y="18" width="7" height="1" fill="#fff"/><rect x="208" y="18" width="1" height="1" fill="#a0a0a0"/><rect x="209" y="18" width="1" height="1" fill="#fff"/><rect x="217" y="18" width="7" height="1" fill="#a0a0a0"/><rect x="224" y="18" width="1" height="1" fill="#fff"/><rect x="225" y="18" width="6" height="1" fill="#a0a0a0"/><rect x="231" y="18" width="1" height="1" fill="#fff"/><rect x="232" y="18" width="1" height="1" fill="#a0a0a0"/><rect x="233" y="18" width="1" height="1" fill="#fff"/><rect x="240" y="18" width="1" height="1" fill="#a0a0a0"/><rect x="241" y="18" width="1" height="1" fill="#fff"/><rect x="242" y="18" width="3" height="1" fill="#a0a0a0"/><rect x="245" y="18" width="3" height="1" fill="#fff"/><rect x="249" y="18" width="1" height="1" fill="#fff"/><rect x="250" y="18" width="1" height="1" fill="#a0a0a0"/><rect x="251" y="18" width="1" height="1" fill="#fff"/><rect x="252" y="18" width="3" height="1" fill="#a0a0a0"/><rect x="255" y="18" width="1" height="1" fill="#fff"/><rect x="22" y="19" width="1" height="1" fill="#a0a0a0"/><rect x="24" y="19" width="12" height="1" fill="#fff"/><rect x="59" y="19" width="3" height="1" fill="#a0a0a0"/><rect x="62" y="19" width="6" height="1" fill="#fff"/><rect x="68" y="19" width="3" height="1" fill="#a0a0a0"/><rect x="95" y="19" width="10" height="1" fill="#a0a0a0"/><rect x="105" y="19" width="1" height="1" fill="#fff"/><rect x="119" y="19" width="11" height="1" fill="#a0a0a0"/><rect x="130" y="19" width="2" height="1" fill="#fff"/><rect x="143" y="19" width="9" height="1" fill="#a0a0a0"/><rect x="152" y="19" width="2" height="1" fill="#fff"/><rect x="154" y="19" width="3" height="1" fill="#a0a0a0"/><rect x="157" y="19" width="1" height="1" fill="#fff"/><rect x="174" y="19" width="1" height="1" fill="#a0a0a0"/><rect x="175" y="19" width="1" height="1" fill="#fff"/><rect x="177" y="19" width="1" height="1" fill="#a0a0a0"/><rect x="178" y="19" width="1" height="1" fill="#fff"/><rect x="179" y="19" width="3" height="1" fill="#a0a0a0"/><rect x="183" y="19" width="1" height="1" fill="#fff"/><rect x="200" y="19" width="9" height="1" fill="#a0a0a0"/><rect x="209" y="19" width="1" height="1" fill="#fff"/><rect x="217" y="19" width="7" height="1" fill="#a0a0a0"/><rect x="224" y="19" width="8" height="1" fill="#fff"/><rect x="232" y="19" width="1" height="1" fill="#a0a0a0"/><rect x="233" y="19" width="1" height="1" fill="#fff"/><rect x="240" y="19" width="1" height="1" fill="#a0a0a0"/><rect x="241" y="19" width="1" height="1" fill="#fff"/><rect x="242" y="19" width="3" height="1" fill="#a0a0a0"/><rect x="245" y="19" width="1" height="1" fill="#fff"/><rect x="250" y="19" width="1" height="1" fill="#a0a0a0"/><rect x="251" y="19" width="1" height="1" fill="#fff"/><rect x="252" y="19" width="3" height="1" fill="#a0a0a0"/><rect x="255" y="19" width="1" height="1" fill="#fff"/><rect x="23" y="20" width="11" height="1" fill="#a0a0a0"/><rect x="60" y="20" width="2" height="1" fill="#fff"/><rect x="62" y="20" width="4" height="1" fill="#a0a0a0"/><rect x="66" y="20" width="2" height="1" fill="#fff"/><rect x="68" y="20" width="2" height="1" fill="#a0a0a0"/><rect x="70" y="20" width="2" height="1" fill="#fff"/><rect x="96" y="20" width="10" height="1" fill="#fff"/><rect x="120" y="20" width="11" height="1" fill="#fff"/><rect x="143" y="20" width="14" height="1" fill="#a0a0a0"/><rect x="157" y="20" width="1" height="1" fill="#fff"/><rect x="175" y="20" width="2" height="1" fill="#a0a0a0"/><rect x="178" y="20" width="1" height="1" fill="#fff"/><rect x="180" y="20" width="3" height="1" fill="#fff"/><rect x="201" y="20" width="9" height="1" fill="#fff"/><rect x="218" y="20" width="5" height="1" fill="#fff"/><rect x="223" y="20" width="10" height="1" fill="#a0a0a0"/><rect x="233" y="20" width="1" height="1" fill="#fff"/><rect x="240" y="20" width="5" height="1" fill="#a0a0a0"/><rect x="245" y="20" width="1" height="1" fill="#fff"/><rect x="250" y="20" width="5" height="1" fill="#a0a0a0"/><rect x="255" y="20" width="1" height="1" fill="#fff"/><rect x="23" y="21" width="10" height="1" fill="#a0a0a0"/><rect x="33" y="21" width="2" height="1" fill="#fff"/><rect x="63" y="21" width="3" height="1" fill="#fff"/><rect x="66" y="21" width="3" height="1" fill="#a0a0a0"/><rect x="69" y="21" width="2" height="1" fill="#fff"/><rect x="144" y="21" width="14" height="1" fill="#fff"/><rect x="176" y="21" width="2" height="1" fill="#fff"/><rect x="224" y="21" width="10" height="1" fill="#fff"/><rect x="241" y="21" width="5" height="1" fill="#fff"/><rect x="251" y="21" width="5" height="1" fill="#fff"/><rect x="24" y="22" width="10" height="1" fill="#fff"/><rect x="67" y="22" width="3" height="1" fill="#fff"/></svg>
<!-- code window (behind) -->
<div class="a" style="left:8px;top:74px;width:1016px;height:500px;background:#f0f0f0"></div>
<div class="a" style="left:8px;top:74px;width:1016px;height:1px;background:#a0a0a0"></div>
<div class="a" style="left:8px;top:74px;width:1px;height:498px;background:#a0a0a0"></div>
<div class="a" style="left:9px;top:75px;width:1015px;height:2px;background:#696969"></div>
<div class="a" style="left:9px;top:75px;width:1px;height:497px;background:#696969"></div>
<div class="a" style="left:10px;top:77px;width:1014px;height:1px;background:#fff"></div>
<div class="a" style="left:10px;top:77px;width:1px;height:495px;background:#fff"></div>
<div class="a" style="left:20px;top:79px;width:400px;height:30px;background:#fff;border-top:1px solid #a0a0a0;border-left:1px solid #a0a0a0"></div>
<div class="a" style="left:21px;top:80px;width:399px;height:29px;border-top:1px solid #696969;border-left:1px solid #696969"></div>
<div class="t" style="left:24px;top:83px;font-size:12px;line-height:15px">Form</div>

<!-- code window lower part -->
<div class="a" style="left:8px;top:521px;width:4px;height:50px;background:linear-gradient(to right,#a0a0a0 0 1px,#696969 1px 2px,#a0a0a0 2px 3px,#696969 3px)"></div>
<div class="a" style="left:12px;top:523px;width:20px;height:29px;background:#f0f0f0"></div>
<div class="a" style="left:32px;top:523px;width:1px;height:29px;background:#000"></div>
<div class="a" style="left:33px;top:523px;width:400px;height:29px;background:#fff"></div>
<div class="a" style="left:12px;top:552px;width:400px;height:17px;background:repeating-conic-gradient(#fff 0 25%,#f0f0f0 0 50%) 0 0/2px 2px"></div>
<div class="btn" style="left:12px;top:552px;width:17px;height:17px"></div>
<div class="a" style="left:29px;top:552px;width:17px;height:17px;background:#f0f0f0;border-top:1px solid #696969;border-left:1px solid #696969;box-shadow:inset 1px 1px 0 #a0a0a0"></div>
<div class="btn" style="left:46px;top:552px;width:17px;height:17px"></div>
<div class="btn" style="left:63px;top:552px;width:88px;height:17px"></div>
<svg class="a" style="left:12px;top:552px" width="60" height="17" shape-rendering="crispEdges">
<rect x="3" y="3" width="10" height="1" fill="#000"/><rect x="7" y="5" width="6" height="1" fill="#000"/><rect x="3" y="7" width="10" height="1" fill="#000"/>
<rect x="20" y="4" width="10" height="1" fill="#000"/><rect x="24" y="6" width="6" height="1" fill="#000"/><rect x="24" y="8" width="6" height="1" fill="#000"/><rect x="20" y="10" width="10" height="1" fill="#000"/>
<path d="M39,8.5 L43,5 L43,12 Z" fill="#000"/>
</svg>
<div class="a" style="left:8px;top:569px;width:400px;height:1px;background:#e3e3e3"></div>
<div class="a" style="left:8px;top:570px;width:400px;height:2px;background:#fff"></div>

<!-- Immediate window -->
<div class="a" style="left:8px;top:572px;width:1016px;height:7px;background:#f0f0f0"></div>
<div class="a cap-in" style="left:8px;top:579px;width:1016px;height:17px"></div>
<div class="t" style="left:9px;top:580px;font-size:12px;line-height:15px;color:#434e54">Immediate</div>
<div class="a" style="left:8px;top:596px;width:1016px;height:1px;background:#fff"></div>
<div class="a" style="left:8px;top:597px;width:1016px;height:8px;background:#fff;border-top:2px solid #696969;border-left:2px solid #a0a0a0"></div>

<div class="a" style="left:913px;top:601px;width:16px;height:4px;background:#f0f0f0;border-left:1px solid #e3e3e3"></div>
<div class="a" style="left:929px;top:601px;width:1px;height:4px;background:#696969"></div>
<div class="a" style="left:930px;top:601px;width:9px;height:4px;background:#f0f0f0"></div>
<div class="a" style="left:939px;top:601px;width:1px;height:4px;background:#696969"></div>
<!-- ===== DSA - United States window ===== -->
<div class="a" style="left:4px;top:90px;width:380px;height:433px;background:#f4f7fc;border:1px solid #e3e3e3;border-bottom:1px solid #696969"></div>
<div class="a" style="left:5px;top:91px;width:380px;height:1px;background:#fff"></div>
<div class="a" style="left:5px;top:91px;width:1px;height:430px;background:#fff"></div>
<div class="a cap-in" style="left:12px;top:98px;width:372px;height:21px"></div>
<svg class="a" style="left:15px;top:101px" width="16" height="16" shape-rendering="crispEdges"><rect x="2" y="2" width="4" height="1" fill="#000"/><rect x="2" y="2" width="1" height="9" fill="#000"/><rect x="3" y="3" width="2" height="1" fill="#00ffff"/><rect x="3" y="4" width="2" height="1" fill="#000"/><rect x="3" y="5" width="2" height="5" fill="#fff"/><rect x="2" y="10" width="3" height="1" fill="#000"/><rect x="5" y="3" width="4" height="1" fill="#000"/><rect x="5" y="4" width="4" height="1" fill="#00ffff"/><rect x="5" y="5" width="4" height="1" fill="#000"/><rect x="5" y="6" width="4" height="5" fill="#fff"/><rect x="5" y="11" width="4" height="1" fill="#000"/><rect x="9" y="4" width="3" height="1" fill="#000"/><rect x="9" y="5" width="2" height="1" fill="#00ffff"/><rect x="9" y="6" width="2" height="1" fill="#000"/><rect x="9" y="7" width="2" height="5" fill="#fff"/><rect x="9" y="12" width="3" height="1" fill="#000"/><rect x="11" y="4" width="1" height="9" fill="#000"/><rect x="12" y="10" width="2" height="1" fill="#8a8a80"/><rect x="12" y="11" width="1" height="1" fill="#8a8a80"/></svg>
<div class="t" style="left:35px;top:102px;font-size:12px;line-height:15px;color:#434e54;letter-spacing:-0.28px">DSA - United States</div>
<div class="t" style="left:149px;top:102px;font-size:12px;line-height:15px;color:#434e54;letter-spacing:-0.25px">Date: 1(fix later)</div>
<div class="a" style="left:12px;top:119px;width:372px;height:396px;background:#f0f0f0"></div>
<div class="t" style="left:20px;top:122px;font-size:12px;line-height:15px;color:#8d8d8d">File</div>
<div class="t" style="left:51px;top:122px;font-size:12px;line-height:15px;color:#8d8d8d">Edit</div>
<div class="t" style="left:85px;top:122px;font-size:12px;line-height:15px;color:#8d8d8d">Tools</div>
<div class="a" style="left:12px;top:140px;width:372px;height:1px;background:#a0a0a0"></div>
<div class="a" style="left:12px;top:141px;width:372px;height:1px;background:#fff"></div>

<div class="btn" style="left:12px;top:144px;width:23px;height:22px"></div>
<div class="btn" style="left:35px;top:144px;width:23px;height:22px"></div>
<div class="btn" style="left:58px;top:144px;width:23px;height:22px"></div>
<div class="btn" style="left:89px;top:144px;width:23px;height:22px"></div>
<div class="btn" style="left:112px;top:144px;width:23px;height:22px"></div>
<div class="btn" style="left:135px;top:144px;width:23px;height:22px"></div>

<svg class="a" style="left:12px;top:144px" width="150" height="22" shape-rendering="crispEdges"><rect x="5" y="4" width="8" height="1" fill="#000"/><rect x="35" y="4" width="4" height="1" fill="#000"/><rect x="50" y="4" width="14" height="1" fill="#000"/><rect x="85" y="4" width="1" height="1" fill="#000"/><rect x="89" y="4" width="1" height="1" fill="#000"/><rect x="103" y="4" width="6" height="1" fill="#000"/><rect x="131" y="4" width="4" height="1" fill="#000"/><rect x="5" y="5" width="1" height="1" fill="#000"/><rect x="6" y="5" width="6" height="1" fill="#fff"/><rect x="12" y="5" width="1" height="1" fill="#000"/><rect x="13" y="5" width="1" height="1" fill="#d0d0d0"/><rect x="34" y="5" width="1" height="1" fill="#000"/><rect x="39" y="5" width="2" height="1" fill="#000"/><rect x="50" y="5" width="1" height="1" fill="#000"/><rect x="51" y="5" width="1" height="1" fill="#808000"/><rect x="52" y="5" width="1" height="1" fill="#000"/><rect x="53" y="5" width="8" height="1" fill="#fff"/><rect x="61" y="5" width="1" height="1" fill="#000"/><rect x="62" y="5" width="1" height="1" fill="#fff"/><rect x="63" y="5" width="1" height="1" fill="#000"/><rect x="85" y="5" width="1" height="1" fill="#000"/><rect x="89" y="5" width="1" height="1" fill="#000"/><rect x="103" y="5" width="1" height="1" fill="#000"/><rect x="104" y="5" width="5" height="1" fill="#fff"/><rect x="109" y="5" width="1" height="1" fill="#000"/><rect x="126" y="5" width="5" height="1" fill="#000"/><rect x="131" y="5" width="4" height="1" fill="#ffff00"/><rect x="135" y="5" width="5" height="1" fill="#000"/><rect x="5" y="6" width="1" height="1" fill="#000"/><rect x="6" y="6" width="6" height="1" fill="#fff"/><rect x="12" y="6" width="1" height="1" fill="#000"/><rect x="13" y="6" width="1" height="1" fill="#fff"/><rect x="14" y="6" width="1" height="1" fill="#d0d0d0"/><rect x="38" y="6" width="3" height="1" fill="#000"/><rect x="50" y="6" width="1" height="1" fill="#000"/><rect x="51" y="6" width="1" height="1" fill="#808000"/><rect x="52" y="6" width="1" height="1" fill="#000"/><rect x="53" y="6" width="1" height="1" fill="#fff"/><rect x="54" y="6" width="6" height="1" fill="#e8e8e8"/><rect x="60" y="6" width="1" height="1" fill="#fff"/><rect x="61" y="6" width="1" height="1" fill="#000"/><rect x="62" y="6" width="1" height="1" fill="#808000"/><rect x="63" y="6" width="1" height="1" fill="#000"/><rect x="85" y="6" width="1" height="1" fill="#000"/><rect x="89" y="6" width="1" height="1" fill="#000"/><rect x="103" y="6" width="1" height="1" fill="#000"/><rect x="104" y="6" width="5" height="1" fill="#fff"/><rect x="110" y="6" width="1" height="1" fill="#000"/><rect x="126" y="6" width="1" height="1" fill="#000"/><rect x="127" y="6" width="1" height="1" fill="#808080"/><rect x="128" y="6" width="1" height="1" fill="#808000"/><rect x="129" y="6" width="1" height="1" fill="#808080"/><rect x="130" y="6" width="1" height="1" fill="#000"/><rect x="131" y="6" width="4" height="1" fill="#ffff00"/><rect x="135" y="6" width="1" height="1" fill="#000"/><rect x="136" y="6" width="1" height="1" fill="#808000"/><rect x="137" y="6" width="1" height="1" fill="#808080"/><rect x="138" y="6" width="1" height="1" fill="#808000"/><rect x="139" y="6" width="1" height="1" fill="#000"/><rect x="5" y="7" width="1" height="1" fill="#000"/><rect x="6" y="7" width="6" height="1" fill="#fff"/><rect x="12" y="7" width="4" height="1" fill="#000"/><rect x="27" y="7" width="3" height="1" fill="#000"/><rect x="39" y="7" width="2" height="1" fill="#000"/><rect x="50" y="7" width="1" height="1" fill="#000"/><rect x="51" y="7" width="1" height="1" fill="#808000"/><rect x="52" y="7" width="1" height="1" fill="#000"/><rect x="53" y="7" width="1" height="1" fill="#fff"/><rect x="54" y="7" width="6" height="1" fill="#e8e8e8"/><rect x="60" y="7" width="1" height="1" fill="#fff"/><rect x="61" y="7" width="1" height="1" fill="#000"/><rect x="62" y="7" width="1" height="1" fill="#808000"/><rect x="63" y="7" width="1" height="1" fill="#000"/><rect x="85" y="7" width="1" height="1" fill="#000"/><rect x="89" y="7" width="1" height="1" fill="#000"/><rect x="103" y="7" width="1" height="1" fill="#000"/><rect x="104" y="7" width="1" height="1" fill="#fff"/><rect x="105" y="7" width="2" height="1" fill="#000"/><rect x="107" y="7" width="2" height="1" fill="#fff"/><rect x="109" y="7" width="6" height="1" fill="#000080"/><rect x="126" y="7" width="1" height="1" fill="#000"/><rect x="127" y="7" width="1" height="1" fill="#808000"/><rect x="128" y="7" width="1" height="1" fill="#808080"/><rect x="129" y="7" width="1" height="1" fill="#000"/><rect x="130" y="7" width="6" height="1" fill="#fff"/><rect x="136" y="7" width="1" height="1" fill="#000"/><rect x="137" y="7" width="1" height="1" fill="#808000"/><rect x="138" y="7" width="1" height="1" fill="#808080"/><rect x="139" y="7" width="1" height="1" fill="#000"/><rect x="5" y="8" width="1" height="1" fill="#000"/><rect x="6" y="8" width="9" height="1" fill="#fff"/><rect x="15" y="8" width="1" height="1" fill="#000"/><rect x="26" y="8" width="1" height="1" fill="#000"/><rect x="27" y="8" width="1" height="1" fill="#fff"/><rect x="28" y="8" width="1" height="1" fill="#ffff00"/><rect x="29" y="8" width="8" height="1" fill="#000"/><rect x="50" y="8" width="1" height="1" fill="#000"/><rect x="51" y="8" width="1" height="1" fill="#808000"/><rect x="52" y="8" width="1" height="1" fill="#000"/><rect x="53" y="8" width="1" height="1" fill="#fff"/><rect x="54" y="8" width="6" height="1" fill="#e8e8e8"/><rect x="60" y="8" width="1" height="1" fill="#fff"/><rect x="61" y="8" width="1" height="1" fill="#000"/><rect x="62" y="8" width="1" height="1" fill="#808000"/><rect x="63" y="8" width="1" height="1" fill="#000"/><rect x="86" y="8" width="1" height="1" fill="#000"/><rect x="88" y="8" width="1" height="1" fill="#000"/><rect x="103" y="8" width="1" height="1" fill="#000"/><rect x="104" y="8" width="5" height="1" fill="#fff"/><rect x="109" y="8" width="1" height="1" fill="#000080"/><rect x="110" y="8" width="5" height="1" fill="#fff"/><rect x="115" y="8" width="1" height="1" fill="#000080"/><rect x="116" y="8" width="1" height="1" fill="#fff"/><rect x="126" y="8" width="1" height="1" fill="#000"/><rect x="127" y="8" width="1" height="1" fill="#808080"/><rect x="128" y="8" width="1" height="1" fill="#808000"/><rect x="129" y="8" width="1" height="1" fill="#808080"/><rect x="130" y="8" width="1" height="1" fill="#808000"/><rect x="131" y="8" width="1" height="1" fill="#808080"/><rect x="132" y="8" width="1" height="1" fill="#808000"/><rect x="133" y="8" width="1" height="1" fill="#808080"/><rect x="134" y="8" width="1" height="1" fill="#808000"/><rect x="135" y="8" width="1" height="1" fill="#808080"/><rect x="136" y="8" width="1" height="1" fill="#808000"/><rect x="137" y="8" width="1" height="1" fill="#808080"/><rect x="138" y="8" width="1" height="1" fill="#808000"/><rect x="139" y="8" width="1" height="1" fill="#000"/><rect x="5" y="9" width="1" height="1" fill="#000"/><rect x="6" y="9" width="9" height="1" fill="#fff"/><rect x="15" y="9" width="1" height="1" fill="#000"/><rect x="26" y="9" width="1" height="1" fill="#000"/><rect x="27" y="9" width="1" height="1" fill="#ffff00"/><rect x="28" y="9" width="1" height="1" fill="#fff"/><rect x="29" y="9" width="1" height="1" fill="#ffff00"/><rect x="30" y="9" width="1" height="1" fill="#fff"/><rect x="31" y="9" width="1" height="1" fill="#ffff00"/><rect x="32" y="9" width="1" height="1" fill="#fff"/><rect x="33" y="9" width="1" height="1" fill="#ffff00"/><rect x="34" y="9" width="1" height="1" fill="#fff"/><rect x="35" y="9" width="1" height="1" fill="#ffff00"/><rect x="36" y="9" width="1" height="1" fill="#000"/><rect x="50" y="9" width="1" height="1" fill="#000"/><rect x="51" y="9" width="1" height="1" fill="#808000"/><rect x="52" y="9" width="1" height="1" fill="#000"/><rect x="53" y="9" width="1" height="1" fill="#fff"/><rect x="54" y="9" width="6" height="1" fill="#e8e8e8"/><rect x="60" y="9" width="1" height="1" fill="#fff"/><rect x="61" y="9" width="1" height="1" fill="#000"/><rect x="62" y="9" width="1" height="1" fill="#808000"/><rect x="63" y="9" width="1" height="1" fill="#000"/><rect x="87" y="9" width="1" height="1" fill="#000"/><rect x="103" y="9" width="1" height="1" fill="#000"/><rect x="104" y="9" width="1" height="1" fill="#fff"/><rect x="105" y="9" width="4" height="1" fill="#000"/><rect x="109" y="9" width="1" height="1" fill="#000080"/><rect x="110" y="9" width="6" height="1" fill="#fff"/><rect x="116" y="9" width="1" height="1" fill="#000080"/><rect x="126" y="9" width="1" height="1" fill="#000"/><rect x="127" y="9" width="1" height="1" fill="#808000"/><rect x="128" y="9" width="1" height="1" fill="#808080"/><rect x="129" y="9" width="1" height="1" fill="#808000"/><rect x="130" y="9" width="1" height="1" fill="#808080"/><rect x="131" y="9" width="1" height="1" fill="#808000"/><rect x="132" y="9" width="1" height="1" fill="#808080"/><rect x="133" y="9" width="1" height="1" fill="#808000"/><rect x="134" y="9" width="1" height="1" fill="#808080"/><rect x="135" y="9" width="1" height="1" fill="#808000"/><rect x="136" y="9" width="1" height="1" fill="#808080"/><rect x="137" y="9" width="1" height="1" fill="#808000"/><rect x="138" y="9" width="1" height="1" fill="#808080"/><rect x="139" y="9" width="1" height="1" fill="#000"/><rect x="5" y="10" width="1" height="1" fill="#000"/><rect x="6" y="10" width="9" height="1" fill="#fff"/><rect x="15" y="10" width="1" height="1" fill="#000"/><rect x="26" y="10" width="1" height="1" fill="#000"/><rect x="27" y="10" width="1" height="1" fill="#fff"/><rect x="28" y="10" width="1" height="1" fill="#ffff00"/><rect x="29" y="10" width="1" height="1" fill="#fff"/><rect x="30" y="10" width="1" height="1" fill="#ffff00"/><rect x="31" y="10" width="1" height="1" fill="#fff"/><rect x="32" y="10" width="1" height="1" fill="#ffff00"/><rect x="33" y="10" width="1" height="1" fill="#fff"/><rect x="34" y="10" width="1" height="1" fill="#ffff00"/><rect x="35" y="10" width="1" height="1" fill="#fff"/><rect x="36" y="10" width="1" height="1" fill="#000"/><rect x="50" y="10" width="1" height="1" fill="#000"/><rect x="51" y="10" width="1" height="1" fill="#808000"/><rect x="52" y="10" width="1" height="1" fill="#000"/><rect x="53" y="10" width="8" height="1" fill="#fff"/><rect x="61" y="10" width="1" height="1" fill="#000"/><rect x="62" y="10" width="1" height="1" fill="#808000"/><rect x="63" y="10" width="1" height="1" fill="#000"/><rect x="87" y="10" width="1" height="1" fill="#000"/><rect x="103" y="10" width="1" height="1" fill="#000"/><rect x="104" y="10" width="5" height="1" fill="#fff"/><rect x="109" y="10" width="1" height="1" fill="#000080"/><rect x="110" y="10" width="1" height="1" fill="#fff"/><rect x="111" y="10" width="2" height="1" fill="#000"/><rect x="113" y="10" width="4" height="1" fill="#fff"/><rect x="117" y="10" width="1" height="1" fill="#000080"/><rect x="126" y="10" width="1" height="1" fill="#000"/><rect x="127" y="10" width="1" height="1" fill="#808080"/><rect x="128" y="10" width="1" height="1" fill="#808000"/><rect x="129" y="10" width="1" height="1" fill="#808080"/><rect x="130" y="10" width="1" height="1" fill="#808000"/><rect x="131" y="10" width="1" height="1" fill="#808080"/><rect x="132" y="10" width="8" height="1" fill="#000080"/><rect x="5" y="11" width="1" height="1" fill="#000"/><rect x="6" y="11" width="9" height="1" fill="#fff"/><rect x="15" y="11" width="1" height="1" fill="#000"/><rect x="26" y="11" width="1" height="1" fill="#000"/><rect x="27" y="11" width="1" height="1" fill="#ffff00"/><rect x="28" y="11" width="1" height="1" fill="#fff"/><rect x="29" y="11" width="1" height="1" fill="#ffff00"/><rect x="30" y="11" width="1" height="1" fill="#fff"/><rect x="31" y="11" width="11" height="1" fill="#000"/><rect x="50" y="11" width="1" height="1" fill="#000"/><rect x="51" y="11" width="12" height="1" fill="#808000"/><rect x="63" y="11" width="1" height="1" fill="#000"/><rect x="86" y="11" width="1" height="1" fill="#000080"/><rect x="88" y="11" width="1" height="1" fill="#000080"/><rect x="103" y="11" width="1" height="1" fill="#000"/><rect x="104" y="11" width="1" height="1" fill="#fff"/><rect x="105" y="11" width="4" height="1" fill="#000"/><rect x="109" y="11" width="1" height="1" fill="#000080"/><rect x="110" y="11" width="7" height="1" fill="#fff"/><rect x="117" y="11" width="1" height="1" fill="#000080"/><rect x="126" y="11" width="1" height="1" fill="#000"/><rect x="127" y="11" width="1" height="1" fill="#808000"/><rect x="128" y="11" width="1" height="1" fill="#808080"/><rect x="129" y="11" width="1" height="1" fill="#808000"/><rect x="130" y="11" width="1" height="1" fill="#808080"/><rect x="131" y="11" width="1" height="1" fill="#808000"/><rect x="132" y="11" width="1" height="1" fill="#000080"/><rect x="133" y="11" width="7" height="1" fill="#fff"/><rect x="140" y="11" width="1" height="1" fill="#000080"/><rect x="5" y="12" width="1" height="1" fill="#000"/><rect x="6" y="12" width="9" height="1" fill="#fff"/><rect x="15" y="12" width="1" height="1" fill="#000"/><rect x="26" y="12" width="1" height="1" fill="#000"/><rect x="27" y="12" width="1" height="1" fill="#fff"/><rect x="28" y="12" width="1" height="1" fill="#ffff00"/><rect x="29" y="12" width="1" height="1" fill="#fff"/><rect x="30" y="12" width="1" height="1" fill="#000"/><rect x="31" y="12" width="9" height="1" fill="#808000"/><rect x="40" y="12" width="1" height="1" fill="#000"/><rect x="50" y="12" width="1" height="1" fill="#000"/><rect x="51" y="12" width="12" height="1" fill="#808000"/><rect x="63" y="12" width="1" height="1" fill="#000"/><rect x="84" y="12" width="3" height="1" fill="#000080"/><rect x="88" y="12" width="3" height="1" fill="#000080"/><rect x="103" y="12" width="1" height="1" fill="#000"/><rect x="104" y="12" width="5" height="1" fill="#fff"/><rect x="109" y="12" width="1" height="1" fill="#000080"/><rect x="110" y="12" width="1" height="1" fill="#fff"/><rect x="111" y="12" width="5" height="1" fill="#000"/><rect x="116" y="12" width="1" height="1" fill="#fff"/><rect x="117" y="12" width="1" height="1" fill="#000080"/><rect x="126" y="12" width="1" height="1" fill="#000"/><rect x="127" y="12" width="1" height="1" fill="#808080"/><rect x="128" y="12" width="1" height="1" fill="#808000"/><rect x="129" y="12" width="1" height="1" fill="#808080"/><rect x="130" y="12" width="1" height="1" fill="#808000"/><rect x="131" y="12" width="1" height="1" fill="#808080"/><rect x="132" y="12" width="1" height="1" fill="#000080"/><rect x="133" y="12" width="8" height="1" fill="#fff"/><rect x="141" y="12" width="1" height="1" fill="#000080"/><rect x="5" y="13" width="1" height="1" fill="#000"/><rect x="6" y="13" width="9" height="1" fill="#fff"/><rect x="15" y="13" width="1" height="1" fill="#000"/><rect x="26" y="13" width="1" height="1" fill="#000"/><rect x="27" y="13" width="1" height="1" fill="#ffff00"/><rect x="28" y="13" width="1" height="1" fill="#fff"/><rect x="29" y="13" width="1" height="1" fill="#000"/><rect x="30" y="13" width="9" height="1" fill="#808000"/><rect x="39" y="13" width="1" height="1" fill="#000"/><rect x="50" y="13" width="1" height="1" fill="#000"/><rect x="51" y="13" width="1" height="1" fill="#808000"/><rect x="52" y="13" width="10" height="1" fill="#000"/><rect x="62" y="13" width="1" height="1" fill="#808000"/><rect x="63" y="13" width="1" height="1" fill="#000"/><rect x="83" y="13" width="1" height="1" fill="#000080"/><rect x="86" y="13" width="1" height="1" fill="#000080"/><rect x="88" y="13" width="1" height="1" fill="#000080"/><rect x="91" y="13" width="1" height="1" fill="#000080"/><rect x="103" y="13" width="6" height="1" fill="#000"/><rect x="109" y="13" width="1" height="1" fill="#000080"/><rect x="110" y="13" width="7" height="1" fill="#fff"/><rect x="117" y="13" width="1" height="1" fill="#000080"/><rect x="126" y="13" width="1" height="1" fill="#000"/><rect x="127" y="13" width="1" height="1" fill="#808000"/><rect x="128" y="13" width="1" height="1" fill="#808080"/><rect x="129" y="13" width="1" height="1" fill="#808000"/><rect x="130" y="13" width="1" height="1" fill="#808080"/><rect x="131" y="13" width="1" height="1" fill="#808000"/><rect x="132" y="13" width="1" height="1" fill="#000080"/><rect x="133" y="13" width="1" height="1" fill="#fff"/><rect x="134" y="13" width="3" height="1" fill="#000080"/><rect x="137" y="13" width="4" height="1" fill="#fff"/><rect x="141" y="13" width="1" height="1" fill="#000080"/><rect x="5" y="14" width="1" height="1" fill="#000"/><rect x="6" y="14" width="9" height="1" fill="#fff"/><rect x="15" y="14" width="1" height="1" fill="#000"/><rect x="26" y="14" width="1" height="1" fill="#000"/><rect x="27" y="14" width="1" height="1" fill="#fff"/><rect x="28" y="14" width="1" height="1" fill="#000"/><rect x="29" y="14" width="9" height="1" fill="#808000"/><rect x="38" y="14" width="1" height="1" fill="#000"/><rect x="50" y="14" width="1" height="1" fill="#000"/><rect x="51" y="14" width="1" height="1" fill="#808000"/><rect x="52" y="14" width="7" height="1" fill="#000"/><rect x="59" y="14" width="2" height="1" fill="#fff"/><rect x="61" y="14" width="1" height="1" fill="#000"/><rect x="62" y="14" width="1" height="1" fill="#808000"/><rect x="63" y="14" width="1" height="1" fill="#000"/><rect x="83" y="14" width="1" height="1" fill="#000080"/><rect x="86" y="14" width="1" height="1" fill="#000080"/><rect x="88" y="14" width="1" height="1" fill="#000080"/><rect x="91" y="14" width="1" height="1" fill="#000080"/><rect x="109" y="14" width="1" height="1" fill="#000080"/><rect x="110" y="14" width="1" height="1" fill="#fff"/><rect x="111" y="14" width="5" height="1" fill="#000"/><rect x="116" y="14" width="1" height="1" fill="#fff"/><rect x="117" y="14" width="1" height="1" fill="#000080"/><rect x="126" y="14" width="1" height="1" fill="#000"/><rect x="127" y="14" width="1" height="1" fill="#808080"/><rect x="128" y="14" width="1" height="1" fill="#808000"/><rect x="129" y="14" width="1" height="1" fill="#808080"/><rect x="130" y="14" width="1" height="1" fill="#808000"/><rect x="131" y="14" width="1" height="1" fill="#808080"/><rect x="132" y="14" width="1" height="1" fill="#000080"/><rect x="133" y="14" width="8" height="1" fill="#fff"/><rect x="141" y="14" width="1" height="1" fill="#000080"/><rect x="5" y="15" width="1" height="1" fill="#000"/><rect x="6" y="15" width="9" height="1" fill="#fff"/><rect x="15" y="15" width="1" height="1" fill="#000"/><rect x="26" y="15" width="2" height="1" fill="#000"/><rect x="28" y="15" width="9" height="1" fill="#808000"/><rect x="37" y="15" width="1" height="1" fill="#000"/><rect x="50" y="15" width="1" height="1" fill="#000"/><rect x="51" y="15" width="1" height="1" fill="#808000"/><rect x="52" y="15" width="7" height="1" fill="#000"/><rect x="59" y="15" width="2" height="1" fill="#fff"/><rect x="61" y="15" width="1" height="1" fill="#000"/><rect x="62" y="15" width="1" height="1" fill="#808000"/><rect x="63" y="15" width="1" height="1" fill="#000"/><rect x="83" y="15" width="1" height="1" fill="#000080"/><rect x="86" y="15" width="1" height="1" fill="#000080"/><rect x="88" y="15" width="1" height="1" fill="#000080"/><rect x="91" y="15" width="1" height="1" fill="#000080"/><rect x="109" y="15" width="1" height="1" fill="#000080"/><rect x="110" y="15" width="7" height="1" fill="#fff"/><rect x="117" y="15" width="1" height="1" fill="#000080"/><rect x="126" y="15" width="1" height="1" fill="#000"/><rect x="127" y="15" width="1" height="1" fill="#808000"/><rect x="128" y="15" width="1" height="1" fill="#808080"/><rect x="129" y="15" width="1" height="1" fill="#808000"/><rect x="130" y="15" width="1" height="1" fill="#808080"/><rect x="131" y="15" width="1" height="1" fill="#808000"/><rect x="132" y="15" width="1" height="1" fill="#000080"/><rect x="133" y="15" width="1" height="1" fill="#fff"/><rect x="134" y="15" width="6" height="1" fill="#000080"/><rect x="140" y="15" width="1" height="1" fill="#fff"/><rect x="141" y="15" width="1" height="1" fill="#000080"/><rect x="5" y="16" width="11" height="1" fill="#000"/><rect x="26" y="16" width="11" height="1" fill="#000"/><rect x="50" y="16" width="1" height="1" fill="#000"/><rect x="51" y="16" width="1" height="1" fill="#808000"/><rect x="52" y="16" width="7" height="1" fill="#000"/><rect x="59" y="16" width="2" height="1" fill="#fff"/><rect x="61" y="16" width="1" height="1" fill="#000"/><rect x="62" y="16" width="1" height="1" fill="#808000"/><rect x="63" y="16" width="1" height="1" fill="#000"/><rect x="83" y="16" width="1" height="1" fill="#000080"/><rect x="86" y="16" width="1" height="1" fill="#000080"/><rect x="88" y="16" width="3" height="1" fill="#000080"/><rect x="109" y="16" width="9" height="1" fill="#000080"/><rect x="126" y="16" width="6" height="1" fill="#000"/><rect x="132" y="16" width="1" height="1" fill="#000080"/><rect x="133" y="16" width="8" height="1" fill="#fff"/><rect x="141" y="16" width="1" height="1" fill="#000080"/><rect x="50" y="17" width="14" height="1" fill="#000"/><rect x="84" y="17" width="2" height="1" fill="#000080"/><rect x="132" y="17" width="10" height="1" fill="#000080"/></svg>
<div class="a" style="left:28px;top:180px;width:97px;height:33px;border:1px solid #646464"></div>
<div class="btn" style="left:29px;top:181px;width:95px;height:31px"></div>
<div class="t gt" style="left:28px;top:184.9px;width:97px;text-align:center;white-space:normal">Hardware<br>Purchasing Office</div>
<div class="btn" style="left:28px;top:220px;width:97px;height:33px"></div>
<div class="t gt" style="left:28px;top:230.9px;width:97px;text-align:center">Research Annex</div>
<div class="btn" style="left:28px;top:260px;width:97px;height:33px"></div>
<div class="t gt" style="left:28px;top:270.9px;width:97px;text-align:center">New Game/Player</div>
<div class="btn" style="left:36px;top:412px;width:81px;height:33px"></div>
<div class="t gt" style="left:36px;top:421.9px;width:81px;text-align:center">Insert</div>

<!-- status bar -->
<div class="sunk" style="left:12px;top:499px;width:203px;height:15px"></div>
<div class="t gt" style="left:16px;top:500.9px">Status</div>
<div class="sunk" style="left:218px;top:499px;width:94px;height:15px"></div>
<div class="t gt" style="left:222px;top:500.9px;letter-spacing:-0.05px">8/16/2012</div>
<div class="sunk" style="left:315px;top:499px;width:60px;height:15px"></div>
<div class="t gt" style="left:319px;top:500.9px">7:54 PM</div>

<!-- ===== Hardware Inventory window ===== -->
<div class="a" style="left:368px;top:9px;width:656px;height:592px;background:#f0f0f0;border-top:1px solid #e3e3e3;border-left:1px solid #e3e3e3;border-right:1px solid #696969;border-bottom:1px solid #696969;box-shadow:inset 1px 1px 0 #fff, inset -1px -1px 0 #a0a0a0"></div>
<div class="a cap-act" style="left:371px;top:12px;width:650px;height:21px"></div>
<div class="t" style="left:394px;top:16px;font-size:12px;line-height:15px;color:#000;letter-spacing:-0.08px">Hardware Inventory</div>
<div class="btn" style="left:960px;top:14px;width:19px;height:17px"></div>
<div class="btn" style="left:979px;top:14px;width:19px;height:17px"></div>
<div class="btn" style="left:1000px;top:14px;width:19px;height:17px"></div>
<svg class="a" style="left:960px;top:14px" width="60" height="17" shape-rendering="crispEdges">
<rect x="5" y="10" width="7" height="2" fill="#000"/>
<rect x="23" y="3" width="10" height="10" fill="none" stroke="#a0a0a0" stroke-width="1" transform="translate(0.5,0.5)"/>
<rect x="23" y="4" width="10" height="1" fill="#a0a0a0"/>
<rect x="24" y="14" width="10" height="1" fill="#fff"/><rect x="34" y="5" width="1" height="10" fill="#fff"/>
<path d="M45.5,4.5 L53.5,12.5 M53.5,4.5 L45.5,12.5" stroke="#000" stroke-width="2" shape-rendering="auto"/>
</svg>
<svg class="a" style="left:374px;top:15px" width="16" height="16" shape-rendering="crispEdges"><rect x="2" y="2" width="4" height="1" fill="#000"/><rect x="2" y="2" width="1" height="9" fill="#000"/><rect x="3" y="3" width="2" height="1" fill="#00ffff"/><rect x="3" y="4" width="2" height="1" fill="#000"/><rect x="3" y="5" width="2" height="5" fill="#fff"/><rect x="2" y="10" width="3" height="1" fill="#000"/><rect x="5" y="3" width="4" height="1" fill="#000"/><rect x="5" y="4" width="4" height="1" fill="#00ffff"/><rect x="5" y="5" width="4" height="1" fill="#000"/><rect x="5" y="6" width="4" height="5" fill="#fff"/><rect x="5" y="11" width="4" height="1" fill="#000"/><rect x="9" y="4" width="3" height="1" fill="#000"/><rect x="9" y="5" width="2" height="1" fill="#00ffff"/><rect x="9" y="6" width="2" height="1" fill="#000"/><rect x="9" y="7" width="2" height="5" fill="#fff"/><rect x="9" y="12" width="3" height="1" fill="#000"/><rect x="11" y="4" width="1" height="9" fill="#000"/><rect x="12" y="10" width="2" height="1" fill="#8a8a80"/><rect x="12" y="11" width="1" height="1" fill="#8a8a80"/></svg>

<!-- grid -->
<div class="a" style="left:388px;top:51px;width:615px;height:255px;border-top:2px solid #a0a0a0;border-left:2px solid #a0a0a0;border-right:2px solid #fff;border-bottom:2px solid #fff"></div>
<div class="a" style="left:389px;top:52px;width:612px;height:252px;border-top:1px solid #696969;border-left:1px solid #696969;"></div>
<div class="a" id="grid" style="left:390px;top:53px;width:611px;height:251px;background:#808080;overflow:hidden">
<div class="a" style="left:0;top:0;width:611px;height:87px;background:#fff"></div>
<div class="a" style="left:0;top:87px;width:611px;height:1px;background:#000"></div>
<div class="a" style="left:0;top:39px;width:611px;height:1px;background:#c0c0c0"></div>
<div class="a" style="left:0;top:55px;width:611px;height:1px;background:#c0c0c0"></div>
<div class="a" style="left:0;top:71px;width:611px;height:1px;background:#c0c0c0"></div>
<div class="a" style="left:199px;top:0;width:1px;height:87px;background:#c0c0c0"></div>
<div class="a" style="left:259px;top:0;width:1px;height:87px;background:#c0c0c0"></div>
<div class="a" style="left:319px;top:0;width:1px;height:87px;background:#c0c0c0"></div>
<div class="a" style="left:379px;top:0;width:1px;height:87px;background:#c0c0c0"></div>
<div class="a" style="left:446px;top:0;width:1px;height:87px;background:#c0c0c0"></div>
<div class="a" style="left:499px;top:0;width:1px;height:87px;background:#c0c0c0"></div>
<div class="a" style="left:559px;top:0;width:1px;height:87px;background:#c0c0c0"></div>
<div class="t gt" style="left:3px;top:13.9px;line-height:13px">Program Name:</div>
<div class="t gt" style="left:200px;top:13.9px;width:59px;text-align:center;line-height:13px">WU Cost</div>
<div class="t gt" style="left:260px;top:13.9px;width:59px;text-align:center;line-height:13px">IUU Cost</div>
<div class="t gt" style="left:320px;top:2.2px;width:59px;text-align:center;line-height:13px">Launch<br>Cost<br>WU / IUU:</div>
<div class="t gt" style="left:380px;top:2.2px;width:66px;text-align:center;line-height:13px">R&amp;D RP<br>Cost<br>per Team</div>
<div class="t gt" style="left:447px;top:7.65px;width:52px;text-align:center;line-height:13px">Weight:<br>(CP's)</div>
<div class="t gt" style="left:500px;top:2.2px;width:59px;text-align:center;line-height:13px">Max<br>Payload:<br>(CC's)</div>
<div class="t gt" style="left:560px;top:7.65px;width:69px;text-align:center;line-height:13px">Current<br>Safety Level</div>
<div class="t gt" style="left:3px;top:41.8px;line-height:13px">Sub-Orbital Rocket</div>
<div class="t gt" style="left:200px;top:41.8px;width:59px;text-align:center;line-height:13px">35</div>
<div class="t gt" style="left:260px;top:41.8px;width:59px;text-align:center;line-height:13px">5</div>
<div class="t gt" style="left:320px;top:41.8px;width:59px;text-align:center;line-height:13px">0.5/0.1</div>
<div class="t gt" style="left:380px;top:41.8px;width:66px;text-align:center;line-height:13px">4</div>
<div class="t gt" style="left:447px;top:41.8px;width:52px;text-align:center;line-height:13px">0</div>
<div class="t gt" style="left:500px;top:41.8px;width:59px;text-align:center;line-height:13px">45</div>
<div class="t gt" style="left:560px;top:41.8px;width:69px;text-align:center;line-height:13px">working</div>
<div class="t gt" style="left:3px;top:57.8px;line-height:13px">Sounding Rocket</div>
<div class="t gt" style="left:200px;top:57.8px;width:59px;text-align:center;line-height:13px">25</div>
<div class="t gt" style="left:260px;top:57.8px;width:59px;text-align:center;line-height:13px">3</div>
<div class="t gt" style="left:320px;top:57.8px;width:59px;text-align:center;line-height:13px">0.1/0.01</div>
<div class="t gt" style="left:380px;top:57.8px;width:66px;text-align:center;line-height:13px">2</div>
<div class="t gt" style="left:447px;top:57.8px;width:52px;text-align:center;line-height:13px">0</div>
<div class="t gt" style="left:500px;top:57.8px;width:59px;text-align:center;line-height:13px">10</div>
<div class="t gt" style="left:560px;top:57.8px;width:69px;text-align:center;line-height:13px">working</div>
<div class="a" style="left:320px;top:56px;width:59px;height:15px;border:1px dotted #000"></div>
<div class="a" style="left:0;top:234px;width:611px;height:17px;background:repeating-conic-gradient(#fff 0 25%,#f0f0f0 0 50%) 0 0/2px 2px"></div>
<div class="btn" style="left:0;top:234px;width:17px;height:17px"></div>
<div class="a" style="left:5px;top:239px;width:0;height:0;border-top:3.5px solid transparent;border-bottom:3.5px solid transparent;border-right:4px solid #000"></div>
<div class="btn" style="left:17px;top:234px;width:17px;height:17px"></div>
<div class="btn" style="left:594px;top:234px;width:17px;height:17px"></div>
<div class="a" style="left:601px;top:239px;width:0;height:0;border-top:3.5px solid transparent;border-bottom:3.5px solid transparent;border-left:4px solid #000"></div>
</div>

<!-- picture -->
<div class="a" style="left:387px;top:330px;width:169px;height:169px;border-top:1px solid #a0a0a0;border-left:1px solid #a0a0a0;border-right:1px solid #fff;border-bottom:1px solid #fff"></div>
<div class="a" style="left:388px;top:331px;width:167px;height:167px;border-top:1px solid #696969;border-left:1px solid #696969;border-right:1px solid #fff;border-bottom:1px solid #fff"></div>
<svg class="a" style="left:389px;top:332px" width="165" height="165" viewBox="0 0 165 165">
<defs>
<linearGradient id="sky" x1="0" y1="0" x2="0.3" y2="1"><stop offset="0" stop-color="#b1c2cd"/><stop offset="1" stop-color="#a5b6c1"/></linearGradient>
<radialGradient id="glow" cx="0.5" cy="0.5" r="0.5"><stop offset="0" stop-color="#d8dde0" stop-opacity="0.9"/><stop offset="1" stop-color="#b0c0ca" stop-opacity="0"/></radialGradient>
<linearGradient id="plume" x1="0" y1="0" x2="0" y2="1"><stop offset="0" stop-color="#fff6e0"/><stop offset="0.15" stop-color="#ffffff"/><stop offset="1" stop-color="#fbfaf4"/></linearGradient>
<filter id="bl" x="-20%" y="-20%" width="140%" height="140%"><feGaussianBlur stdDeviation="0.7"/></filter>
<filter id="bl2" x="-50%" y="-50%" width="200%" height="200%"><feGaussianBlur stdDeviation="2.5"/></filter>
</defs>
<rect width="165" height="165" fill="url(#sky)"/>
<ellipse cx="84" cy="140" rx="22" ry="40" fill="url(#glow)"/>
<g filter="url(#bl)">
<!-- tower -->
<line x1="44.5" y1="88" x2="44.5" y2="146" stroke="#3c4242" stroke-width="1.1"/>
<line x1="47.5" y1="91" x2="47.5" y2="146" stroke="#4a5050" stroke-width="1"/>
<line x1="44" y1="104" x2="35" y2="143" stroke="#7e8a90" stroke-width="0.45"/>
<line x1="48" y1="104" x2="55" y2="143" stroke="#7e8a90" stroke-width="0.45"/>
<!-- plume -->
<path d="M79.5,106 L87.5,106 C90,125 94,145 98,165 L70,165 C73,145 76.5,125 79.5,106 Z" fill="url(#plume)"/>
<!-- body -->
<path d="M81.2,22 C81,15 82.5,10 84.2,8.5 C86,10 87.4,15 87.2,22 Z" fill="#4aaee0"/>
<path d="M83,12 C83.5,10 84.5,9.5 85,11 L85,20 L83,20 Z" fill="#8fd0f0"/>
<rect x="80.8" y="22" width="6.4" height="13" fill="#e4dcd8"/>
<rect x="82.5" y="26" width="3" height="3" fill="#c04030"/>
<rect x="80.8" y="34" width="6.4" height="2" fill="#c84a36"/>
<rect x="80.8" y="36" width="6.4" height="34" fill="#b6aeb0"/>
<path d="M87.2,38 L87.2,70 L80.8,70 L80.8,54 Z" fill="#c23d2c"/>
<path d="M80.5,69 L76,77 L76,82 L92,82 L92,77 L87.5,69 Z" fill="#ece6e2"/>
<path d="M76,77 L76,82 L80,82 L80,73 Z" fill="#d0c4c0"/>
<path d="M88,73 L92,77 L92,82 L89,82 Z" fill="#8c9cb0"/>
<rect x="80.8" y="82" width="6.4" height="19" fill="#b8b0b0"/>
<rect x="80.8" y="84" width="6.4" height="2" fill="#d05038"/>
<path d="M79,100 L88,100 L89,107 L78,107 Z" fill="#e8643a"/>
<rect x="80.5" y="102" width="6" height="4" fill="#f8b080"/>
</g>
<!-- clouds -->
<g filter="url(#bl)">
<ellipse cx="42" cy="163" rx="30" ry="6" fill="#efe5d2"/>
<circle cx="42" cy="154" r="10" fill="#f0e6d4"/>
<circle cx="30" cy="159" r="11" fill="#eee2cc"/>
<circle cx="56" cy="157" r="11" fill="#f4eee2"/>
<circle cx="18" cy="165" r="9" fill="#eadcc4"/>
<circle cx="68" cy="163" r="8" fill="#f7f3ea"/>
<ellipse cx="50" cy="152" rx="8" ry="6" fill="#faf7f0"/>
<circle cx="134" cy="164" r="6" fill="#ebe0cc"/>
<circle cx="141" cy="161" r="6" fill="#f0e8da"/>
<circle cx="148" cy="166" r="5" fill="#ebe2d2"/>
<path d="M103,165 L104,161 L106,163 L108,160 L109,165 Z" fill="#4a4a4a"/>
</g>
</svg>
<div class="t gt" style="left:571px;top:323px;">Initial Program Cost: 25<br>Unit Cost: 3<br>R<u>D</u> Cost Per Team: 2<br>Payload: 10<br>Max R<u>D</u> Safety: 80%<br>Max Safety: 96%<br>A sounding rocket is an instrument-carrying rocket designed to take measurements and<br>perform scientific experiments during its sub-orbital flight. May only be used in Sub-orbital<br>missions.</div>

<div class="btn" style="left:411px;top:514px;width:121px;height:33px"></div>
<div class="t gt" style="left:411px;top:523.9px;width:121px;text-align:center">Close</div>

</body></html>
